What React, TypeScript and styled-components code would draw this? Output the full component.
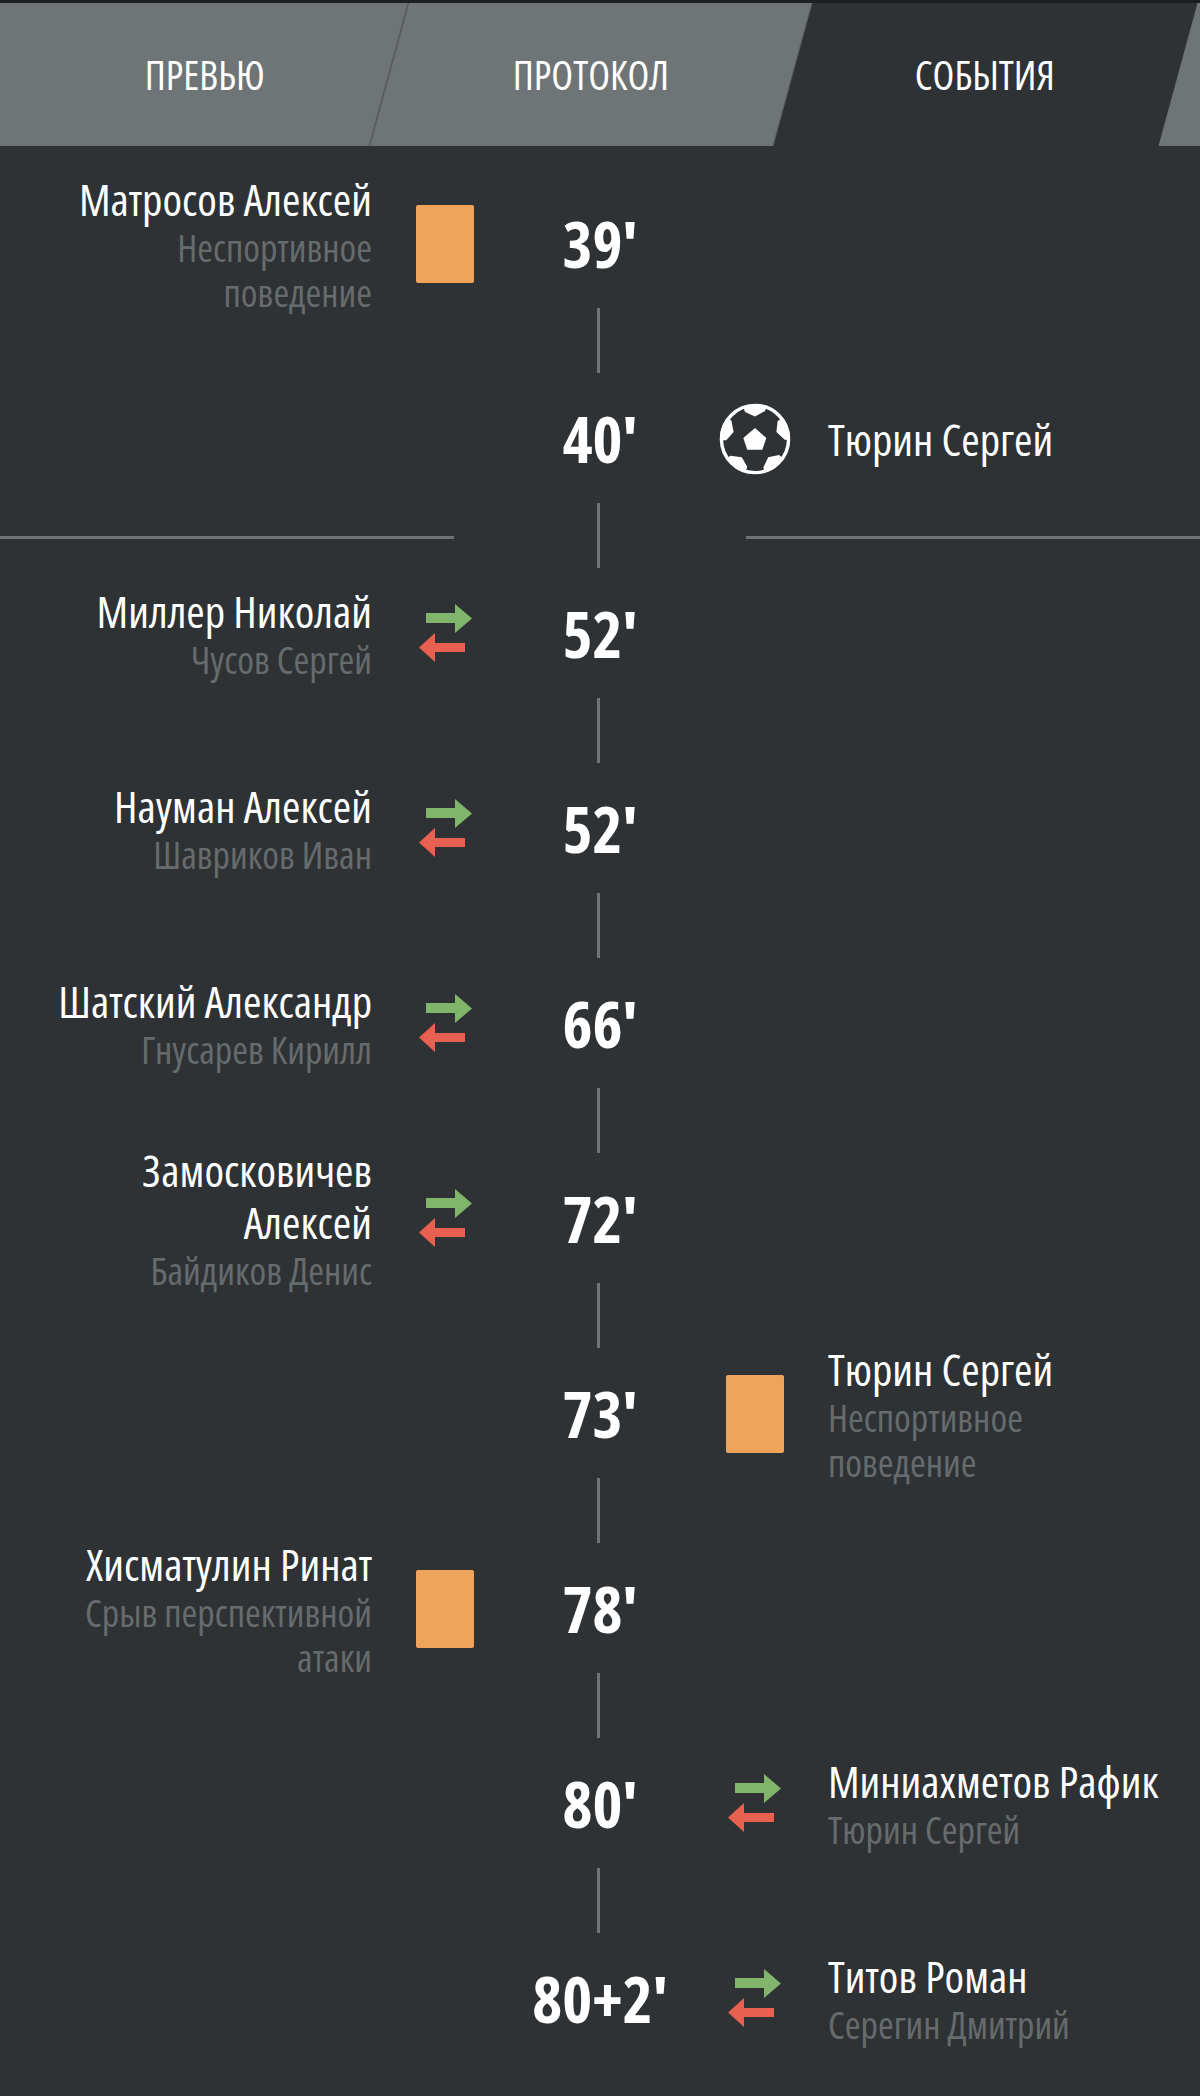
import React from "react";
import styled, { createGlobalStyle } from "styled-components";

const Global = createGlobalStyle`
  html, body { margin: 0; padding: 0; background: #2e3235; }
  body { font-family: "Open Sans", sans-serif; font-stretch: 75%; color: #fff; }
`;

const Page = styled.div`
  width: 1200px;
  min-height: 2096px;
  background: #2e3235;
  overflow: hidden;
  border-top: 3px solid #1c1e23;
  box-sizing: border-box;
`;

const TabBar = styled.nav`
  display: flex;
  height: 143px;
  background: #6f7476;
  overflow: hidden;
`;

const Tab = styled.div<{ $width: number; $active?: boolean; $first?: boolean }>`
  flex: 0 0 ${(p) => p.$width}px;
  box-sizing: border-box;
  margin-left: ${(p) => (p.$first ? "-20px" : "0")};
  padding-left: ${(p) => (p.$first ? "42px" : "0")};
  display: flex;
  align-items: center;
  justify-content: center;
  transform: skewX(-15.25deg);
  background: ${(p) => (p.$active ? "#2e3235" : "#6f7476")};
  border-right: ${(p) => (p.$active ? "0" : "2px solid #585c5e")};
`;

const TabLabel = styled.span`
  transform: skewX(15.25deg);
  font-size: 40px;
  line-height: 44px;
  color: #fff;
`;

const Timeline = styled.main`
  padding-top: 31px;
`;

const Row = styled.section`
  display: grid;
  grid-template-columns: 372px 146px 164px 146px 372px;
  grid-template-rows: 126px;
  height: 131px;
  box-sizing: border-box;
  padding-top: 5px;
  align-items: center;
`;

const EventText = styled.div<{ $side: "left" | "right" }>`
  grid-column: ${(p) => (p.$side === "left" ? 1 : 5)};
  grid-row: 1;
  text-align: ${(p) => (p.$side === "left" ? "right" : "left")};
  padding: ${(p) => (p.$side === "left" ? "0 0 3px 30px" : "0 30px 3px 0")};
`;

const PlayerName = styled.div`
  font-size: 44.5px;
  line-height: 52px;
  color: #fff;
`;

const Detail = styled.div`
  font-size: 38px;
  line-height: 45px;
  color: #666b6d;
`;

const IconSlot = styled.div<{ $side: "left" | "right" }>`
  grid-column: ${(p) => (p.$side === "left" ? 2 : 4)};
  grid-row: 1;
  display: flex;
  justify-content: center;
  margin-left: ${(p) => (p.$side === "left" ? "0" : "-1px")};
`;

const Minute = styled.div`
  grid-column: 3;
  grid-row: 1;
  text-align: center;
  font-size: 64px;
  line-height: 70px;
  margin-top: -2px;
  font-weight: 700;
  color: #fff;
  white-space: nowrap;
`;

const YellowCard = styled.div`
  width: 58px;
  height: 78px;
  margin-top: -2px;
  border-radius: 2px;
  background: #f0a35b;
`;

const Connector = styled.div`
  display: flex;
  justify-content: center;
  height: 64px;
`;

const ConnectorLine = styled.div`
  width: 3px;
  height: 65px;
  margin-left: -3px;
  background: #6f7476;
`;

const HalfBreak = styled.div`
  display: grid;
  grid-template-columns: 454px 292px 454px;
  grid-template-rows: 64px;
  height: 64px;
  align-items: center;
  justify-items: center;
`;

const BreakRule = styled.div`
  width: 100%;
  height: 3px;
  margin-top: 5px;
  background: #6f7476;
`;

const SwapIcon = styled.svg`
  display: block;
  margin-top: -4px;
`;

const BallIcon = styled.svg`
  display: block;
  margin-top: -3px;
`;

function Swap() {
  return (
    <SwapIcon width="53" height="58" viewBox="0 0 53 58">
      <path d="M7 9h29V0l17 14.5L36 29V19H7z" fill="#80b56b" />
      <path d="M46 39H16V29L0 43.5 16 58V48h30z" fill="#e8604f" />
    </SwapIcon>
  );
}

function Ball() {
  return (
    <BallIcon width="72" height="72" viewBox="-36 -36 72 72">
      <defs>
        <clipPath id="ball-edge">
          <circle r="35" />
        </clipPath>
      </defs>
      <circle r="33.6" fill="none" stroke="#fff" strokeWidth="3.4" />
      <path d="M0-11 11.3-1 7.3 10.7H-7.7L-11.7-1z" fill="#fff" />
      <g clipPath="url(#ball-edge)" fill="#fff">
        {[0, 72, 144, 216, 288].map((angle) => (
          <path key={angle} d="M-13-36H13L10-28 0-22.5-10-27z" transform={`rotate(${angle})`} />
        ))}
      </g>
    </BallIcon>
  );
}

type Kind = "card" | "goal" | "swap";
type Event = { minute: string; side: "left" | "right"; kind: Kind; name: string; detail?: string };

const events: Event[] = [
  { minute: "39'", side: "left", kind: "card", name: "Матросов Алексей", detail: "Неспортивное поведение" },
  { minute: "40'", side: "right", kind: "goal", name: "Тюрин Сергей" },
  { minute: "52'", side: "left", kind: "swap", name: "Миллер Николай", detail: "Чусов Сергей" },
  { minute: "52'", side: "left", kind: "swap", name: "Науман Алексей", detail: "Шавриков Иван" },
  { minute: "66'", side: "left", kind: "swap", name: "Шатский Александр", detail: "Гнусарев Кирилл" },
  { minute: "72'", side: "left", kind: "swap", name: "Замосковичев Алексей", detail: "Байдиков Денис" },
  { minute: "73'", side: "right", kind: "card", name: "Тюрин Сергей", detail: "Неспортивное поведение" },
  { minute: "78'", side: "left", kind: "card", name: "Хисматулин Ринат", detail: "Срыв перспективной атаки" },
  { minute: "80'", side: "right", kind: "swap", name: "Миниахметов Рафик", detail: "Тюрин Сергей" },
  { minute: "80+2'", side: "right", kind: "swap", name: "Титов Роман", detail: "Серегин Дмитрий" },
];

function EventIcon({ kind }: { kind: Kind }) {
  if (kind === "card") return <YellowCard />;
  if (kind === "goal") return <Ball />;
  return <Swap />;
}

export default function App() {
  return (
    <Page>
      <Global />
      <TabBar>
        <Tab $width={409.5} $first>
          <TabLabel>ПРЕВЬЮ</TabLabel>
        </Tab>
        <Tab $width={403.5}>
          <TabLabel>ПРОТОКОЛ</TabLabel>
        </Tab>
        <Tab $width={384.5} $active>
          <TabLabel>СОБЫТИЯ</TabLabel>
        </Tab>
      </TabBar>
      <Timeline>
        {events.map((e, i) => (
          <React.Fragment key={i}>
            <Row>
              <EventText $side={e.side}>
                <PlayerName>{e.name}</PlayerName>
                {e.detail && <Detail>{e.detail}</Detail>}
              </EventText>
              <IconSlot $side={e.side}>
                <EventIcon kind={e.kind} />
              </IconSlot>
              <Minute>{e.minute}</Minute>
            </Row>
            {i < events.length - 1 &&
              (i === 1 ? (
                <HalfBreak>
                  <BreakRule />
                  <ConnectorLine />
                  <BreakRule />
                </HalfBreak>
              ) : (
                <Connector>
                  <ConnectorLine />
                </Connector>
              ))}
          </React.Fragment>
        ))}
      </Timeline>
    </Page>
  );
}
